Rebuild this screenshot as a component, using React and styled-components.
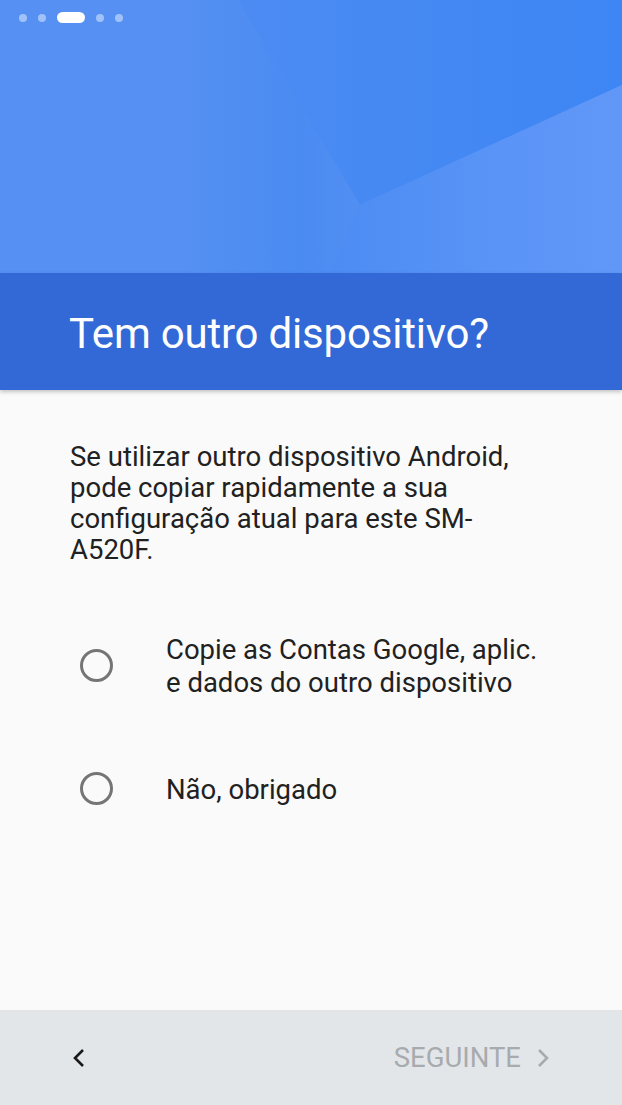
import React from 'react';
import styled, { createGlobalStyle } from 'styled-components';

const GlobalStyle = createGlobalStyle`
  html, body {
    margin: 0;
    padding: 0;
    background: #fafafa;
  }
  body {
    font-family: Roboto, "Noto Sans", "Liberation Sans", sans-serif;
  }
`;

const OPTIONS = [
  { id: 'copy', label: ['Copie as Contas Google, aplic.', 'e dados do outro dispositivo'] },
  { id: 'no', label: ['Não, obrigado'] },
];

const Screen = styled.div`
  display: flex;
  flex-direction: column;
  width: 622px;
  height: 1105px;
  overflow: hidden;
  background: #fafafa;
`;

const Hero = styled.div`
  position: relative;
  height: 273px;
  flex-shrink: 0;
  background: #5590f2;
`;

const HeroArt = styled.svg`
  position: absolute;
  inset: 0;
  width: 100%;
  height: 100%;
`;

const Dots = styled.div`
  position: relative;
  display: flex;
  align-items: center;
  gap: 11px;
  padding: 12px 0 0 19px;
`;

const Dot = styled.span`
  display: block;
  width: ${p => (p.$active ? '28px' : '8px')};
  height: ${p => (p.$active ? '11px' : '8px')};
  border-radius: 6px;
  background: ${p => (p.$active ? '#ffffff' : 'rgba(255, 255, 255, 0.45)')};
`;

const Header = styled.header`
  display: flex;
  align-items: center;
  height: 117px;
  flex-shrink: 0;
  padding-left: 69px;
  background: #3369d6;
  box-shadow: 0 2px 4px rgba(0, 0, 0, 0.22);
  position: relative;
  z-index: 1;
`;

const Title = styled.h1`
  margin: 0;
  margin-top: 4px;
  font-size: 42px;
  font-weight: 400;
  color: #ffffff;
  letter-spacing: -0.2px;
`;

const Content = styled.main`
  flex: 1;
  display: flex;
  flex-direction: column;
  padding: 51px 80px 0 70px;
`;

const Intro = styled.p`
  margin: 0;
  font-size: 27.5px;
  line-height: 31px;
  color: #212121;
`;

const Options = styled.div`
  display: flex;
  flex-direction: column;
  gap: 74px;
  margin-top: 68px;
  padding-left: 10px;
`;

const Option = styled.label`
  display: flex;
  align-items: center;
  gap: 53px;
`;

const Radio = styled.span`
  flex-shrink: 0;
  width: 27px;
  height: 27px;
  border: 3px solid #757575;
  border-radius: 50%;
  margin-top: -2px;
`;

const OptionText = styled.span`
  font-size: 27.5px;
  line-height: 33px;
  color: #212121;
  white-space: nowrap;
`;

const Footer = styled.footer`
  display: flex;
  align-items: center;
  justify-content: space-between;
  height: 95px;
  flex-shrink: 0;
  padding: 0 72px 0 72px;
  background: #e2e6e9;
`;

const NavButton = styled.button`
  display: flex;
  align-items: center;
  gap: 15px;
  padding: 0;
  border: none;
  background: none;
  font-family: inherit;
  font-size: 27.5px;
  color: ${p => (p.$disabled ? '#a8abae' : '#1a1a1a')};
`;

const Chevron = ({ dir, color }) => (
  <svg width="14" height="20" viewBox="0 0 14 20">
    <path
      d={dir === 'left' ? 'M11 2 L3 10 L11 18' : 'M3 2 L11 10 L3 18'}
      fill="none"
      stroke={color}
      strokeWidth="2.6"
    />
  </svg>
);

const App = () => (
  <Screen>
    <GlobalStyle />
    <Hero>
      <HeroArt viewBox="0 0 622 273" preserveAspectRatio="none">
        <defs>
          <linearGradient id="dark" x1="0" y1="0" x2="1" y2="0">
            <stop offset="0" stopColor="#4c8bf2" />
            <stop offset="1" stopColor="#3d86f4" />
          </linearGradient>
          <linearGradient id="light" x1="0" y1="0" x2="1" y2="0">
            <stop offset="0" stopColor="#4c8cf3" />
            <stop offset="0.5" stopColor="#5893f6" />
            <stop offset="1" stopColor="#6198f8" />
          </linearGradient>
          <linearGradient id="shade" x1="0" y1="0" x2="1" y2="0">
            <stop offset="0.3" stopColor="#3f86f2" stopOpacity="0" />
            <stop offset="0.48" stopColor="#3f86f2" stopOpacity="0.5" />
            <stop offset="0.62" stopColor="#3f86f2" stopOpacity="0" />
          </linearGradient>
        </defs>
        <rect x="0" y="0" width="622" height="273" fill="url(#shade)" />
        <polygon points="238,0 622,0 622,85 360,205" fill="url(#dark)" />
        <polygon points="622,85 622,273 330,273 360,205" fill="url(#light)" />
      </HeroArt>
      <Dots>
        <Dot />
        <Dot />
        <Dot $active />
        <Dot />
        <Dot />
      </Dots>
    </Hero>
    <Header>
      <Title>Tem outro dispositivo?</Title>
    </Header>
    <Content>
      <Intro>
        Se utilizar outro dispositivo Android, pode copiar rapidamente a sua
        configuração atual para este SM-A520F.
      </Intro>
      <Options>
        {OPTIONS.map(option => (
          <Option key={option.id}>
            <Radio />
            <OptionText>
              {option.label.map((line, i) => (
                <React.Fragment key={i}>
                  {i > 0 && <br />}
                  {line}
                </React.Fragment>
              ))}
            </OptionText>
          </Option>
        ))}
      </Options>
    </Content>
    <Footer>
      <NavButton>
        <Chevron dir="left" color="#1a1a1a" />
      </NavButton>
      <NavButton $disabled>
        SEGUINTE
        <Chevron dir="right" color="#a8abae" />
      </NavButton>
    </Footer>
  </Screen>
);

export default App;
